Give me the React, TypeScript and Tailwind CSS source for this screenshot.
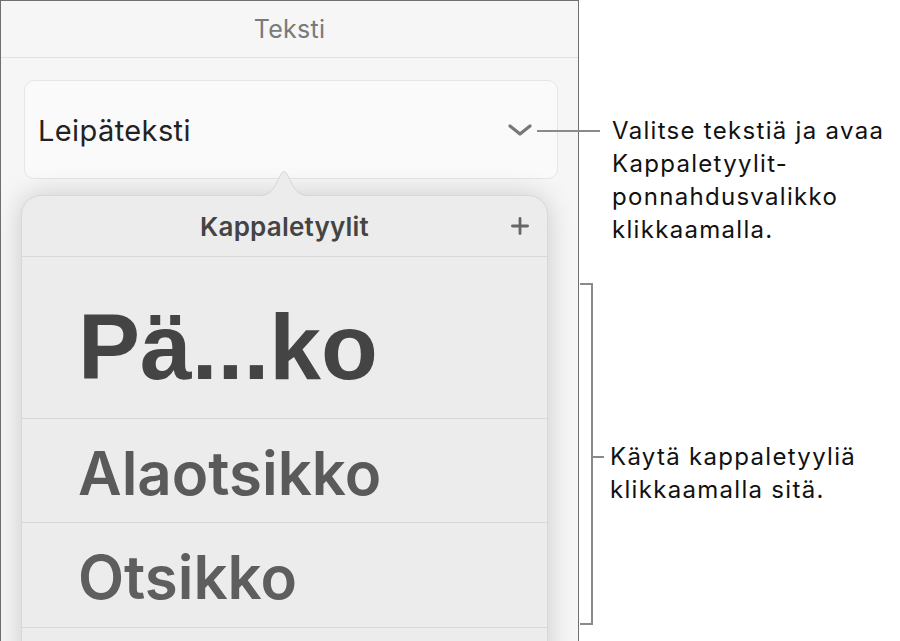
import { Plus } from 'lucide-react';

const ui = { fontFamily: 'Inter, "Liberation Sans", sans-serif' };
const heavy = { fontFamily: '"Liberation Sans", Arial, sans-serif' };

function StyleRow({ label, className, font }: { label: string; className: string; font?: React.CSSProperties }) {
  return (
    <div className={`flex items-center border-b border-[#d8d8d8] pl-[56px] ${className}`} style={font}>
      <span className="whitespace-nowrap">{label}</span>
    </div>
  );
}

export default function App() {
  return (
    <div className="relative flex h-[641px] w-[900px] overflow-hidden bg-white" style={ui}>
      {/* inspector panel */}
      <div className="flex h-[700px] w-[579px] shrink-0 flex-col border-l border-r border-t border-[#6f6f6f] bg-[#f6f6f6]">
        <div className="flex h-[57px] items-center justify-center border-b border-[#e2e2e2] pt-[2px] text-[25px] tracking-[0.3px] text-[#7a7a7a]">
          Teksti
        </div>

        <div className="ml-[23px] mt-[22px] flex h-[99px] w-[534px] items-center justify-between rounded-[10px] border border-[#e6e6e6] bg-[#fafafa] pl-[13px] pr-[24px]">
          <span className="pt-[3px] text-[29px] tracking-[0.4px] text-[#222]">Leipäteksti</span>
          <svg width="26" height="14" viewBox="0 0 26 14">
            <polyline points="3,3 13,11 23,3" fill="none" stroke="#777" strokeWidth="3.2" strokeLinecap="round" strokeLinejoin="round" />
          </svg>
        </div>

        {/* popover */}
        <div className="relative ml-[20px] mt-[16px] w-[527px] flex-1 rounded-t-[20px] border border-[#d9d9d9] bg-[#ececec] shadow-[0_0_28px_rgba(0,0,0,0.18)]">
          <svg className="absolute left-[232px] top-[-27px]" width="60" height="28" viewBox="0 0 60 28">
            <path d="M0 27.5 C12 27.5 17 24 21 17 L27 5 Q30 0 33 5 L39 17 C43 24 48 27.5 60 27.5" fill="#ececec" stroke="#d6d6d6" strokeWidth="1" />
            <rect x="0" y="27" width="60" height="2" fill="#ececec" />
          </svg>
          <div className="relative flex h-[61px] items-center justify-center border-b border-[#d8d8d8]">
            <span className="text-[26px] font-semibold tracking-[0.2px] text-[#444]">Kappaletyylit</span>
            <Plus className="absolute right-[14px] top-[17px] text-[#666]" size={26} strokeWidth={2.6} />
          </div>
          <StyleRow label="Pä...ko" className="h-[162px] pt-[20px] text-[93px] font-bold text-[#444]" font={heavy} />
          <StyleRow label="Alaotsikko" className="h-[104px] pt-[4px] text-[60px] font-semibold text-[#5a5a5a]" />
          <StyleRow label="Otsikko" className="h-[105px] pt-[4px] text-[60px] font-semibold text-[#5e5e5e]" />
          <div className="h-[40px]" />
        </div>
      </div>

      {/* annotations */}
      <div className="flex flex-1 flex-col pl-[1px] text-[#111]">
        <div className="pl-[32px] pt-[114px] text-[24px] leading-[33px] tracking-[1.3px]">
          <p>Valitse tekstiä ja avaa</p>
          <p>Kappaletyylit-</p>
          <p>ponnahdusvalikko</p>
          <p>klikkaamalla.</p>
        </div>
        <div className="mt-[37px] flex items-start">
          <div className="h-[342px] w-[13px] border-b-2 border-r-2 border-t-2 border-[#8a8a8a]" />
          <div className="mt-[157px] flex items-start">
            <div className="mt-[16px] h-[2px] w-[11px] bg-[#8a8a8a]" />
            <div className="pl-[6px] text-[24px] leading-[33px] tracking-[1.3px]">
              <p>Käytä kappaletyyliä</p>
              <p>klikkaamalla sitä.</p>
            </div>
          </div>
        </div>
      </div>

      {/* leader from the chevron */}
      <div className="absolute left-[537px] top-[130px] h-[2px] w-[63px] bg-[#8a8a8a]" />
    </div>
  );
}
